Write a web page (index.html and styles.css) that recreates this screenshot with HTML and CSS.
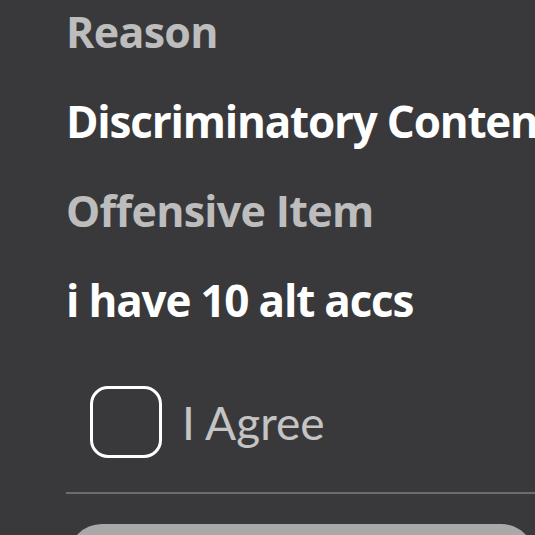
FILE: index.html
```html
<!DOCTYPE html>
<html lang="en">
<head>
    <meta charset="UTF-8">
    <meta name="viewport" content="width=device-width, initial-scale=1.0">
    <title>Report Details</title>
    <link rel="stylesheet" href="styles.css">
</head>
<body>

<div class="panel">
    <div class="field">
        <p class="label">Reason</p>
        <p class="value">Discriminatory Content</p>
    </div>
    <div class="field">
        <p class="label">Offensive Item</p>
        <p class="value">i have 10 alt accs</p>
    </div>

    <label class="agree">
        <span class="box"></span>
        <span class="agree-text">I Agree</span>
    </label>

    <hr class="divider">

    <button class="submit">Continue</button>
</div>

</body>
</html>
```

FILE: styles.css
```css
/* Page */
html, body {
    margin: 0;
    height: 100%;
    overflow: hidden;
}
body {
    background: #39393b;
    font-family: 'Open Sans', 'Noto Sans', sans-serif;
}

/* Panel */
.panel {
    padding: 2px 0 0 66px;
    display: flex;
    flex-direction: column;
    gap: 30px;
    white-space: nowrap;
    overflow: hidden;
}

.field {
    display: flex;
    flex-direction: column;
    gap: 29px;
}

.label,
.value {
    margin: 0;
    line-height: 60px;
    font-weight: bold;
}
.label {
    color: #bdbdbe;
    font-size: 43px;
    letter-spacing: -0.7px;
}
.value {
    color: #ffffff;
    font-size: 44px;
    letter-spacing: -1.2px;
}

/* Checkbox */
.agree {
    display: flex;
    align-items: center;
    gap: 20px;
    margin: 26px 0 0 24px;
    height: 72px;
}
.box {
    width: 66px;
    height: 66px;
    border: 3px solid #ffffff;
    border-radius: 18px;
}
.agree-text {
    color: #c4c4c5;
    font-family: 'Lato', 'Noto Sans', sans-serif;
    font-size: 46px;
}

/* Divider */
.divider {
    margin: 4px 0 0;
    border: none;
    height: 2px;
    background: #6c6c6d;
}

/* Button */
.submit {
    margin: 0 0 0 2px;
    height: 110px;
    border: none;
    border-radius: 34px;
    background: #a9a9aa;
    color: #39393b;
    font-size: 40px;
    font-weight: bold;
}
```
